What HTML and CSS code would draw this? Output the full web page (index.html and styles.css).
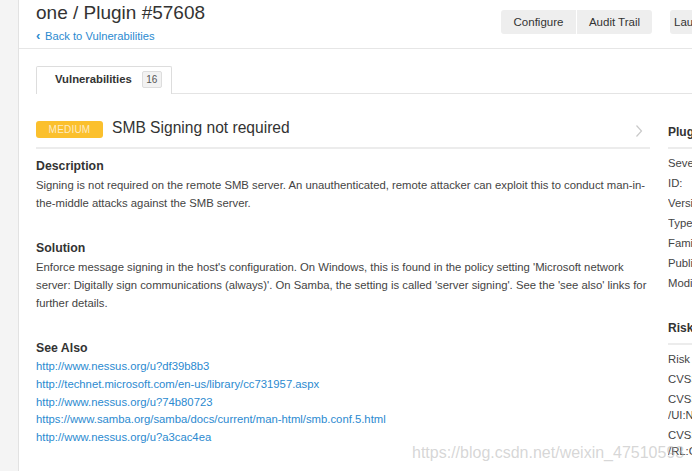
FILE: index.html
```html
<!DOCTYPE html>
<html>
<head>
<meta charset="utf-8">
<link rel="stylesheet" href="styles.css">
</head>
<body>
<div class="page">
  <aside class="rail"></aside>
  <main class="main">
    <header class="header">
      <div class="titles">
        <h1 class="title">one / Plugin #57608</h1>
        <a class="back" href="#"><span class="back-chev">‹</span>Back to Vulnerabilities</a>
      </div>
      <div class="btn-group">
        <button class="btn btn-first">Configure</button>
        <button class="btn btn-last">Audit Trail</button>
      </div>
      <button class="btn btn-solo">Launch ▾</button>
      <button class="btn btn-solo btn-export">Export ▾</button>
    </header>

    <nav class="tabs">
      <div class="tab">
        <span class="tab-label">Vulnerabilities</span>
        <span class="tab-count">16</span>
      </div>
    </nav>

    <div class="body">
      <section class="detail">
        <div class="vuln-head">
          <span class="sev">MEDIUM</span>
          <span class="vuln-title">SMB Signing not required</span>
          <svg class="chev" width="8" height="14" viewBox="0 0 8 14"><polyline points="1.5,1.5 6.5,7 1.5,12.5" fill="none" stroke="#c9c9c9" stroke-width="1.2"/></svg>
        </div>

        <div class="block">
          <h3 class="block-title">Description</h3>
          <p class="block-text">Signing is not required on the remote SMB server. An unauthenticated, remote attacker can exploit this to conduct man-in-the-middle attacks against the SMB server.</p>
        </div>

        <div class="block">
          <h3 class="block-title">Solution</h3>
          <p class="block-text">Enforce message signing in the host's configuration. On Windows, this is found in the policy setting 'Microsoft network server: Digitally sign communications (always)'. On Samba, the setting is called 'server signing'. See the 'see also' links for further details.</p>
        </div>

        <div class="block">
          <h3 class="block-title">See Also</h3>
          <ul class="links">
            <li><a href="#">http://www.nessus.org/u?df39b8b3</a></li>
            <li><a href="#">http://technet.microsoft.com/en-us/library/cc731957.aspx</a></li>
            <li><a href="#">http://www.nessus.org/u?74b80723</a></li>
            <li><a href="#">https://www.samba.org/samba/docs/current/man-html/smb.conf.5.html</a></li>
            <li><a href="#">http://www.nessus.org/u?a3cac4ea</a></li>
          </ul>
        </div>
      </section>

      <aside class="sidebar">
        <h4 class="side-title">Plugin Details</h4>
        <dl class="side-list">
          <div class="row"><dt>Severity:</dt><dd>Medium</dd></div>
          <div class="row"><dt>ID:</dt><dd>57608</dd></div>
          <div class="row"><dt>Version:</dt><dd>1.18</dd></div>
          <div class="row"><dt>Type:</dt><dd>remote</dd></div>
          <div class="row"><dt>Family:</dt><dd>Misc.</dd></div>
          <div class="row"><dt>Published:</dt><dd>January 19, 2012</dd></div>
          <div class="row"><dt>Modified:</dt><dd>October 5, 2018</dd></div>
        </dl>
        <h4 class="side-title side-title-risk">Risk Information</h4>
        <dl class="side-list">
          <div class="row"><dt>Risk Factor:</dt><dd>Medium</dd></div>
          <div class="row"><dt>CVSS v3.0 Base Score:</dt><dd>5.3</dd></div>
          <div class="row"><dt>CVSS v3.0 Vector: CVSS:3.0/AV:N/AC:L/PR:N<br>/UI:N/S:U/C:N/I:L/A:N</dt></div>
          <div class="row"><dt>CVSS v3.0 Temporal Vector: CVSS:3.0/E:U<br>/RL:O/RC:C</dt></div>
        </dl>
      </aside>
    </div>
  </main>
</div>
<div class="watermark">https://blog.csdn.net/weixin_47510593</div>
</body>
</html>
```

FILE: styles.css
```css
html, body {
  margin: 0;
  padding: 0;
  background: #ffffff;
  overflow: hidden;
}
body {
  font-family: "Liberation Sans", Arial, sans-serif;
  color: #333333;
  width: 692px;
  height: 471px;
  position: relative;
}
.page {
  display: flex;
  min-height: 471px;
}
.rail {
  flex: 0 0 18px;
  background: #f4f4f4;
  border-right: 1px solid #e2e2e2;
}
.main {
  flex: 0 0 823px;
  width: 823px;
}

/* header */
.header {
  display: flex;
  align-items: flex-start;
  padding: 1px 17px 4px 17px;
  border-bottom: 1px solid #e6e6e6;
}
.titles {
  flex: 0 0 465px;
}
.title {
  margin: 0;
  font-size: 19px;
  line-height: 24px;
  font-weight: normal;
  color: #333333;
}
.back {
  display: block;
  margin-top: 3px;
  font-size: 11.2px;
  line-height: 16px;
  color: #2b8ad0;
  text-decoration: none;
}
.back-chev {
  display: inline-block;
  width: 9px;
  font-size: 13px;
  font-weight: bold;
}
.btn-group {
  display: flex;
  gap: 1px;
  margin-top: 9px;
}
.btn {
  font-family: "Liberation Sans", Arial, sans-serif;
  font-size: 11.5px;
  color: #333333;
  background: #eeeeee;
  border: none;
  height: 24px;
  padding: 0;
  line-height: 24px;
  width: 75px;
  text-align: center;
}
.btn-first { border-radius: 3px 0 0 3px; }
.btn-last { border-radius: 0 3px 3px 0; }
.btn-solo {
  margin-top: 9px;
  margin-left: 18px;
  border-radius: 3px;
  width: auto;
  padding: 0 12px 0 4px;
  text-align: left;
}
.btn-export {
  margin-left: 8px;
  padding: 0 12px;
}

/* tabs */
.tabs {
  margin: 17px 0 0 17px;
  border-bottom: 1px solid #e4e4e4;
  display: flex;
}
.tab {
  display: flex;
  align-items: center;
  height: 24px;
  padding: 0 9px 3px 18px;
  border: 1px solid #dddddd;
  border-bottom: none;
  border-radius: 2px 2px 0 0;
  background: #ffffff;
  margin-bottom: -1px;
}
.tab-label {
  font-size: 11.3px;
  font-weight: bold;
  color: #333333;
}
.tab-count {
  margin-left: 10px;
  width: 18px;
  height: 15px;
  line-height: 15px;
  text-align: center;
  font-size: 10px;
  color: #555555;
  background: #f2f2f2;
  border: 1px solid #dddddd;
  border-radius: 2px;
}

/* body */
.body {
  display: grid;
  grid-template-columns: 614px 1fr;
  column-gap: 18px;
  padding: 25px 17px 0 17px;
}
.vuln-head {
  display: flex;
  align-items: center;
  height: 20px;
  padding-bottom: 8px;
  border-bottom: 2px solid #ececec;
}
.sev {
  width: 67px;
  height: 17px;
  line-height: 17px;
  text-align: center;
  background: #fbc02d;
  color: rgba(255, 255, 255, 0.72);
  font-size: 10px;
  letter-spacing: 0.2px;
  border-radius: 3px;
}
.vuln-title {
  margin-left: 9px;
  font-size: 15.6px;
  line-height: 20px;
  color: #333333;
  position: relative;
  top: -1px;
}
.chev {
  margin-left: auto;
  margin-right: 7px;
  margin-top: 4px;
}
.block {
  margin-top: 9px;
  margin-bottom: 28px;
}
.block-title {
  margin: 0 0 2px 0;
  font-size: 12.3px;
  line-height: 16px;
  font-weight: bold;
  color: #333333;
}
.block-text {
  margin: 0;
  font-size: 11.3px;
  line-height: 18px;
  color: #444444;
}
.links {
  list-style: none;
  margin: 0;
  padding: 0;
}
.links li {
  font-size: 11.3px;
  line-height: 17.75px;
}
.links a {
  color: #2b8ad0;
  text-decoration: none;
}

/* sidebar */
.sidebar {
  padding-top: 5px;
  white-space: nowrap;
  overflow: hidden;
}
.side-title {
  margin: 0;
  font-size: 12px;
  line-height: 16px;
  font-weight: bold;
  color: #333333;
  padding-bottom: 7px;
  border-bottom: 2px solid #ececec;
}
.side-title-risk {
  margin-top: 29px;
}
.side-list {
  margin: 6px 0 0 0;
  padding: 0;
}
.row {
  display: grid;
  grid-template-columns: 90px max-content;
  font-size: 11.3px;
  line-height: 16px;
  margin-bottom: 4px;
  color: #444444;
}
.row dt, .row dd {
  margin: 0;
}
.row dt {
  overflow: hidden;
}

.watermark {
  position: absolute;
  left: 412px;
  top: 443px;
  font-family: "Liberation Sans", Arial, sans-serif;
  font-size: 16px;
  line-height: 20px;
  color: rgba(180, 180, 180, 0.55);
  white-space: nowrap;
  pointer-events: none;
}
```
